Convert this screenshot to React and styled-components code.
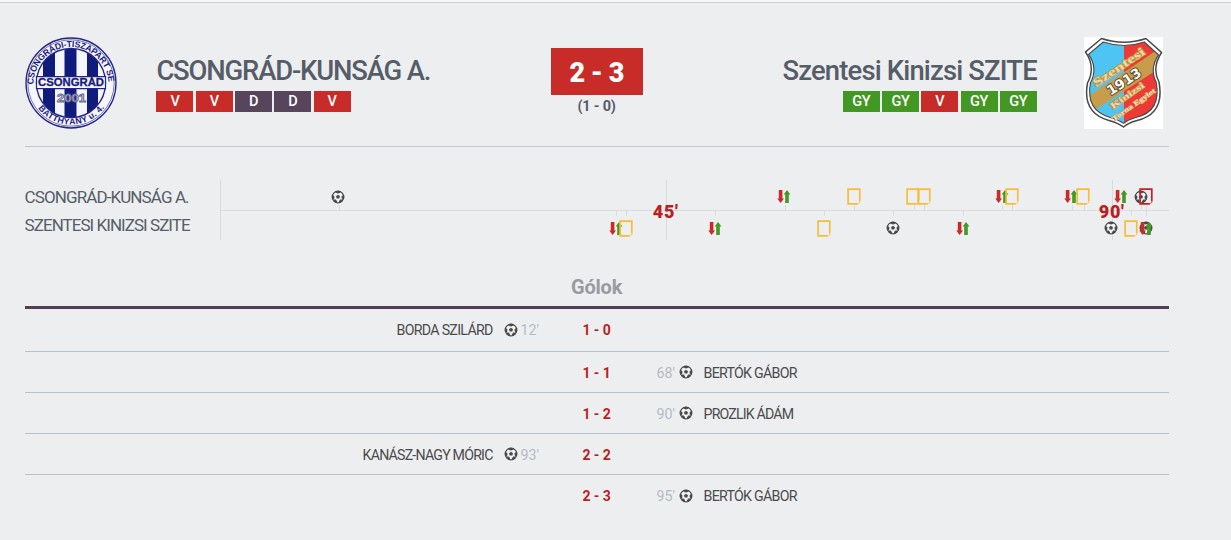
import React from "react";
import styled, { createGlobalStyle } from "styled-components";

const GlobalStyle = createGlobalStyle`
  *, *::before, *::after { box-sizing: border-box; }
  body {
    margin: 0;
    background: #edeef0;
    color: #555d68;
    font-family: Roboto, "Liberation Sans", sans-serif;
    overflow: hidden;
  }
`;

const Page = styled.main`
  height: 540px;
  padding: 0 62.4px 0 24.6px;
  overflow: hidden;
  &::before {
    content: "";
    display: block;
    height: 3px;
    margin: 0 -63px 0 -25px;
    border-bottom: 1px solid #c9cfd5;
    background: #f6f7f8;
  }
`;

const MatchHeader = styled.header`
  display: grid;
  grid-template-columns: 131.8px 1fr 92px 1fr 131.8px;
  height: 144px;
  padding-top: 34px;
  border-bottom: 1px solid #bfc6cd;
`;

const CrestSlot = styled.div`
  display: flex;
  justify-content: ${(p) => (p.$end ? "flex-end" : "flex-start")};
  padding-right: ${(p) => (p.$end ? "6px" : "0")};
`;

const Team = styled.div`
  display: flex;
  flex-direction: column;
  align-items: ${(p) => (p.$away ? "flex-end" : "flex-start")};
  padding-top: 17px;
`;

const TeamName = styled.h1`
  margin: 0;
  height: 37px;
  padding-top: 1px;
  font-size: 27.4px;
  line-height: 33px;
  font-weight: 500;
  letter-spacing: ${(p) => p.$track}px;
  white-space: nowrap;
`;

const Form = styled.div`
  display: flex;
  gap: 2.3px;
`;

const resultColor = { V: "#c72c29", D: "#57465b", GY: "#439824" };

const Result = styled.span`
  width: 37px;
  height: 20.5px;
  background: ${(p) => resultColor[p.$kind]};
  color: #fff;
  font-size: 14.5px;
  line-height: 22px;
  font-weight: 500;
  letter-spacing: -0.4px;
  text-align: center;
`;

const ScoreColumn = styled.div`
  display: flex;
  flex-direction: column;
  padding-top: 10.5px;
  text-align: center;
`;

const Score = styled.div`
  height: 47.5px;
  background: #c72c29;
  color: #fff;
  font-size: 27px;
  line-height: 50px;
  font-weight: 900;
  letter-spacing: -0.5px;
`;

const HalfScore = styled.div`
  font-size: 14.5px;
  line-height: 24px;
  font-weight: 700;
  letter-spacing: -0.2px;
`;

const TimelineRow = styled.section`
  display: flex;
  height: 60px;
  margin-top: 33px;
`;

const TimelineTeams = styled.div`
  width: 195px;
  padding-top: 4px;
  font-size: 17px;
  line-height: 27.5px;
  white-space: nowrap;
`;

const TimelineTeam = styled.div`
  letter-spacing: ${(p) => p.$track}px;
`;

const Track = styled.div`
  position: relative;
  flex: 1;
  border-left: 1px solid #d9dbdd;
  &::before {
    content: "";
    position: absolute;
    left: 0;
    right: 0;
    top: 30px;
    height: 1px;
    background: #d9dbdd;
  }
`;

const Period = styled.div`
  position: absolute;
  left: ${(p) => p.$x}px;
  top: 0;
  height: 60px;
  width: 1px;
  background: #d9dbdd;
  span {
    position: absolute;
    left: 0;
    top: 21px;
    transform: translateX(-50%);
    color: #b91f1f;
    font-size: 18px;
    line-height: 22px;
    font-weight: 900;
    letter-spacing: 0.6px;
  }
`;

const Tick = styled.i`
  position: absolute;
  left: ${(p) => p.$x}px;
  top: ${(p) => (p.$away ? 31 : 25)}px;
  width: 1px;
  height: 5px;
  background: #d9dbdd;
`;

const Marker = styled.div`
  position: absolute;
  left: ${(p) => p.$x - 8}px;
  top: ${(p) => (p.$away ? 39.5 : 8)}px;
  width: 16px;
  height: 17px;
  display: flex;
  align-items: center;
  justify-content: center;
  svg { display: block; flex: none; }
`;

const Goals = styled.section`
  margin-top: 32px;
`;

const GoalsTitle = styled.h2`
  margin: 0;
  height: 37px;
  padding-bottom: 2px;
  border-bottom: 3px solid #523f56;
  color: #989ba2;
  font-size: 20px;
  line-height: 30px;
  font-weight: 700;
  letter-spacing: -0.2px;
  text-align: center;
`;

const GoalRow = styled.div`
  display: grid;
  grid-template-columns: 1fr 112px 1fr;
  align-items: center;
  height: ${(p) => (p.$first ? 43 : 41)}px;
  padding-bottom: ${(p) => (p.$first ? 1 : 0)}px;
  border-bottom: ${(p) => (p.$last ? "0" : "1px solid #b9c1c9")};
  font-size: 14.2px;
  line-height: 20px;
`;

const GoalSide = styled.div`
  display: flex;
  align-items: center;
  justify-content: ${(p) => (p.$home ? "flex-end" : "flex-start")};
  padding-left: ${(p) => (p.$home ? 0 : 4)}px;
  padding-right: ${(p) => (p.$home ? 1 : 0)}px;
`;

const Player = styled.span`
  color: #4b4b4c;
  margin: ${(p) => (p.$home ? "0 11px 0 0" : "0 0 0 11px")};
  padding-top: 1px;
  letter-spacing: ${(p) => p.$track}px;
  white-space: nowrap;
`;

const Minute = styled.span`
  width: 19px;
  margin: ${(p) => (p.$home ? "0 0 0 3px" : "0 3px 0 0")};
  padding-top: 1px;
  color: #b3bbc4;
  white-space: nowrap;
`;

const GoalScore = styled.div`
  padding-top: 1px;
  color: #b91f1f;
  font-size: 14px;
  font-weight: 700;
  letter-spacing: -0.1px;
  text-align: center;
`;

const Ball = () => (
  <svg width="14" height="14" viewBox="0 0 14 14">
    <circle cx="7" cy="7" r="5.8" fill="#f0f1f2" stroke="#4b4b4b" strokeWidth="1.2" />
    <path
      fill="#4b4b4b"
      d="M7 4.8 9 6.3 8.3 8.6H5.7L5 6.3zM4.3 1.2 7 .7l2.7.5-.5 1.5L7 3.6l-2.2-.9zM13 4.9l.2 2.8-1 2-1.3-.8-.4-2.3 1.5-1.7zM11.2 11.4l-2.5 1.7-.9-1.6 1.4-2 2 .1zM5.3 13.1 2.8 11.4l0-1.8 2-.1 1.4 2zM1.8 9.7l-1-2L1 4.9l1 0 1.5 1.7L3.1 8.9z"
    />
  </svg>
);

const Sub = () => (
  <svg width="14" height="15" viewBox="0 0 14 15">
    <path fill="#cb2a2b" d="M1.8 1h3.6v8.6h1.6L3.6 14 .3 9.6h1.5z" />
    <path fill="#419a22" d="M8.2 14h3.6V5.4h1.6L10 1 6.7 5.4h1.5z" />
  </svg>
);

const Card = ({ color }) => (
  <svg width="14" height="17" viewBox="0 0 14 17">
    <path fill="none" stroke={color} strokeWidth="1.7" d="M10.8 15.9H1.1V1.1h11.7v12.4" />
    <path stroke={color} strokeWidth="1" d="M11.5 15.7l1.6-1.6" />
  </svg>
);

const markerIcon = {
  goal: <Ball />,
  sub: <Sub />,
  yellow: <Card color="#f7bd38" />,
  red: <Card color="#c61f27" />,
};

const HomeCrest = () => (
  <svg width="92" height="92" viewBox="0 0 92 92">
    <defs>
      <clipPath id="disc"><circle cx="46" cy="46" r="34.5" /></clipPath>
      <path id="arcTop" d="M8.5 47.5A37.5 37.5 0 0 1 83.5 47.5" />
      <path id="arcBottom" d="M4.5 46A41.5 41.5 0 0 0 87.5 46" />
    </defs>
    <circle cx="46" cy="46" r="45" fill="#f5f6fb" stroke="#242487" strokeWidth="1.3" />
    <circle cx="46" cy="46" r="43.2" fill="none" stroke="#242487" strokeWidth=".6" />
    <g clipPath="url(#disc)">
      <path fill="#0f1c7c" d="M18 10h12v72H18zM39.5 10h12v72h-12zM62 10h11v72H62z" />
    </g>
    <circle cx="46" cy="46" r="34.5" fill="none" stroke="#242487" strokeWidth="1.4" />
    <path fill="#f5f6fb" stroke="#242487" strokeWidth="1.2" d="M11.5 39.7h69v12h-69z" />
    <g fill="#1b1b80" fontFamily="Liberation Sans, sans-serif" fontWeight="700">
      <text x="46" y="49.4" fontSize="10.4" stroke="#1b1b80" strokeWidth=".3" textAnchor="middle" textLength="66" lengthAdjust="spacingAndGlyphs">CSONGRÁD</text>
      <text fontSize="8.7"><textPath href="#arcTop" textLength="115">CSONGRÁDI-TISZAPART SE</textPath></text>
      <text fontSize="8.7"><textPath href="#arcBottom" startOffset="27" textLength="77">BATTHYÁNY u. 4.</textPath></text>
      <text x="46.5" y="65" fontSize="10" textAnchor="middle" textLength="29" lengthAdjust="spacingAndGlyphs" fill="#eeeef4" stroke="#65658f" strokeWidth=".8">2001</text>
    </g>
  </svg>
);

const shield = "M17.5 1.5Q40 9 62 1.5L77.5 15.5Q67.5 31 75 45Q81 77 53 83.5Q44 86 39.5 90Q34 86 25 83.5Q-2 76 3.5 46Q12 30 1.5 15z";

const AwayCrest = () => (
  <svg width="79" height="92" viewBox="0 0 79 92">
    <defs><clipPath id="shieldClip"><path d={shield} transform="translate(3.2 3.6) scale(.92)" /></clipPath></defs>
    <path fill="#fff" d="M0 0h79v92H0z" />
    <path d={shield} fill="#fff" stroke="#494949" strokeWidth="1.5" />
    <g clipPath="url(#shieldClip)">
      <path fill="#4ec4f4" d="M0 0h40v92H0z" />
      <path fill="#ee3a36" d="M40 0h39v92H40z" />
      <path fill="#c79c4a" d="M0 62 79 9v20L0 80z" />
    </g>
    <path d={shield} transform="translate(3.2 3.6) scale(.92)" fill="none" stroke="#494949" strokeWidth="1.2" />
    <g fontFamily="Liberation Serif, serif" fontWeight="700" textAnchor="middle">
      <text transform="translate(37 33.5) rotate(-34)" fontSize="12" fill="#ecd9a8" stroke="#c39a4a" strokeWidth="1.6" paintOrder="stroke" textLength="60" lengthAdjust="spacingAndGlyphs">Szentesi</text>
      <text transform="translate(42.5 48.5) rotate(-33)" fontFamily="DejaVu Sans, sans-serif" fontSize="13.5" fill="#fff" stroke="#55482e" strokeWidth="1.8" paintOrder="stroke" textLength="38" lengthAdjust="spacingAndGlyphs">1913</text>
      <text transform="translate(45 61) rotate(-35)" fontSize="9" fill="#f0d8a4" stroke="#c5964c" strokeWidth="1.4" paintOrder="stroke" textLength="39" lengthAdjust="spacingAndGlyphs">Kinizsi</text>
      <text transform="translate(51 69.5) rotate(-35)" fontSize="7" fill="#f7dfb4" stroke="#d2a05c" strokeWidth="1" paintOrder="stroke" textLength="51" lengthAdjust="spacingAndGlyphs">Torna Egylet</text>
    </g>
  </svg>
);

const events = [
  { kind: "goal", x: 117.5, tick: 118 },
  { kind: "sub", x: 563.5, tick: 564 },
  { kind: "yellow", x: 633, tick: 633 },
  { kind: "yellow", x: 692.5, tick: 693 },
  { kind: "yellow", x: 703, tick: 703 },
  { kind: "sub", x: 781.5, tick: 781 },
  { kind: "yellow", x: 791.5, tick: 791 },
  { kind: "sub", x: 850.5, tick: 851 },
  { kind: "yellow", x: 862.5, tick: 863 },
  { kind: "sub", x: 900, tick: null },
  { kind: "goal", x: 920.5, tick: 920 },
  { kind: "red", x: 925, tick: 925 },
  { kind: "sub", x: 395.5, tick: 395, away: true },
  { kind: "yellow", x: 405, tick: 405, away: true },
  { kind: "sub", x: 494, tick: 494, away: true },
  { kind: "yellow", x: 603, tick: 603, away: true },
  { kind: "goal", x: 672.5, tick: 672, away: true },
  { kind: "sub", x: 742, tick: 742, away: true },
  { kind: "goal", x: 890, tick: null, away: true },
  { kind: "yellow", x: 910.5, tick: 910, away: true },
  { kind: "goal", x: 925, tick: 925, away: true },
  { kind: "sub", x: 925, tick: null, away: true },
];

const goals = [
  { home: true, player: "BORDA SZILÁRD", minute: "12'", score: "1 - 0", track: -0.7 },
  { player: "BERTÓK GÁBOR", minute: "68'", score: "1 - 1", track: -0.72 },
  { player: "PROZLIK ÁDÁM", minute: "90'", score: "1 - 2", track: -0.85 },
  { home: true, player: "KANÁSZ-NAGY MÓRIC", minute: "93'", score: "2 - 2", track: -0.8 },
  { player: "BERTÓK GÁBOR", minute: "95'", score: "2 - 3", track: -0.72 },
];

const FormStrip = ({ results }) => (
  <Form>{results.map((r, i) => <Result key={i} $kind={r}>{r}</Result>)}</Form>
);

export default function App() {
  return (
    <Page>
      <GlobalStyle />
      <MatchHeader>
        <CrestSlot><HomeCrest /></CrestSlot>
        <Team>
          <TeamName $track={-1.15}>CSONGRÁD-KUNSÁG A.</TeamName>
          <FormStrip results={["V", "V", "D", "D", "V"]} />
        </Team>
        <ScoreColumn>
          <Score>2 - 3</Score>
          <HalfScore>(1 - 0)</HalfScore>
        </ScoreColumn>
        <Team $away>
          <TeamName $track={-0.83}>Szentesi Kinizsi SZITE</TeamName>
          <FormStrip results={["GY", "GY", "V", "GY", "GY"]} />
        </Team>
        <CrestSlot $end><AwayCrest /></CrestSlot>
      </MatchHeader>
      <TimelineRow>
        <TimelineTeams>
          <TimelineTeam $track={-0.9}>CSONGRÁD-KUNSÁG A.</TimelineTeam>
          <TimelineTeam $track={-0.96}>SZENTESI KINIZSI SZITE</TimelineTeam>
        </TimelineTeams>
        <Track>
          {events.map((e, i) => e.tick !== null && <Tick key={i} $x={e.tick} $away={e.away} />)}
          <Period $x={445}><span>45'</span></Period>
          <Period $x={891}><span>90'</span></Period>
          {events.map((e, i) => <Marker key={i} $x={e.x} $away={e.away}>{markerIcon[e.kind]}</Marker>)}
        </Track>
      </TimelineRow>
      <Goals>
        <GoalsTitle>Gólok</GoalsTitle>
        {goals.map((g, i) => (
          <GoalRow key={i} $first={i === 0} $last={i === goals.length - 1}>
            <GoalSide $home>
              {g.home && <><Player $home $track={g.track}>{g.player}</Player><Ball /><Minute $home>{g.minute}</Minute></>}
            </GoalSide>
            <GoalScore>{g.score}</GoalScore>
            <GoalSide>
              {!g.home && <><Minute>{g.minute}</Minute><Ball /><Player $track={g.track}>{g.player}</Player></>}
            </GoalSide>
          </GoalRow>
        ))}
      </Goals>
    </Page>
  );
}
